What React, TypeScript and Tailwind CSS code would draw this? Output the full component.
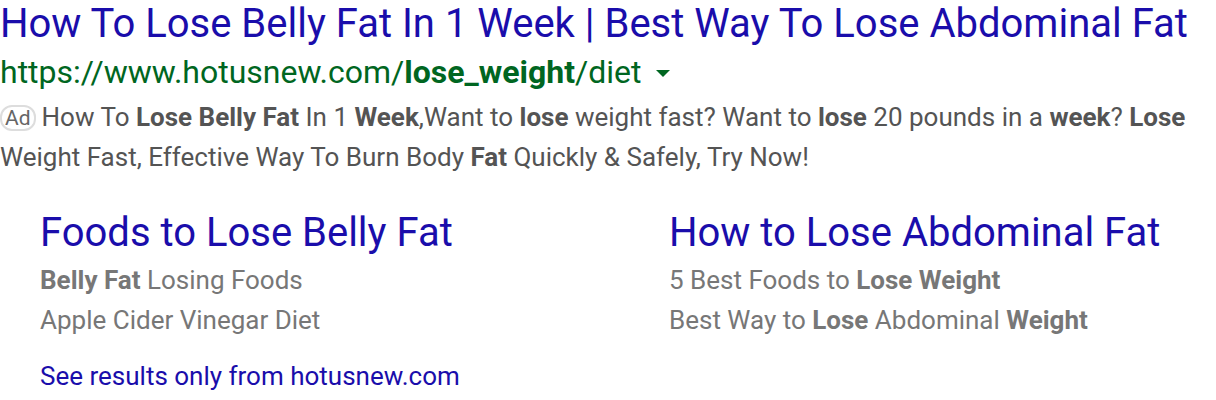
const App = () => {
  const sitelinks = [
    {
      title: "Foods to Lose Belly Fat",
      lines: [
        <>
          <b>Belly Fat</b> Losing Foods
        </>,
        <>Apple Cider Vinegar Diet</>,
      ],
    },
    {
      title: "How to Lose Abdominal Fat",
      lines: [
        <>
          5 Best Foods to <b>Lose Weight</b>
        </>,
        <>
          Best Way to <b>Lose</b> Abdominal <b>Weight</b>
        </>,
      ],
    },
  ];

  return (
    <div className="w-[1216px] h-[400px] bg-white overflow-hidden font-['Roboto',sans-serif]">
      <div className="text-[40px] leading-[47px] text-[#1a0dab] whitespace-nowrap">
        How To Lose Belly Fat In 1 Week | Best Way To Lose Abdominal Fat
      </div>
      <div className="mt-[5px] flex items-center text-[32px] leading-[40px] text-[#006621]">
        <span>
          https://www.hotusnew.com/<b>lose_weight</b>/diet
        </span>
        <span className="ml-[14px] mt-[2px] w-0 h-0 border-l-[7px] border-r-[7px] border-t-[7px] border-l-transparent border-r-transparent border-t-[#006621]" />
      </div>
      <div className="mt-[5px] text-[26px] leading-[40px] text-[#545454]">
        <span className="inline-block mr-[6px] align-[1px] border-2 border-[#dddddd] rounded-[12px] px-[3px] text-[21px] leading-[22px] text-[#666666]">
          Ad
        </span>
        How To <b>Lose Belly Fat</b> In 1 <b>Week</b>,Want to <b>lose</b> weight fast? Want to <b>lose</b> 20 pounds in a{" "}
        <b>week</b>? <b>Lose</b> Weight Fast, Effective Way To Burn Body <b>Fat</b> Quickly &amp; Safely, Try Now!
      </div>
      <div className="mt-[32px] pl-[40px] grid grid-cols-[629px_1fr]">
        {sitelinks.map((s) => (
          <div key={s.title}>
            <div className="text-[40px] leading-[47px] text-[#1a0dab] whitespace-nowrap">{s.title}</div>
            <div className="mt-[4px]">
              {s.lines.map((l, i) => (
                <div key={i} className="text-[26px] leading-[40px] text-[#777777]">
                  {l}
                </div>
              ))}
            </div>
          </div>
        ))}
      </div>
      <div className="mt-[16px] pl-[40px] text-[26px] leading-[40px] text-[#1a0dab]">
        See results only from hotusnew.com
      </div>
    </div>
  );
};

export default App;
